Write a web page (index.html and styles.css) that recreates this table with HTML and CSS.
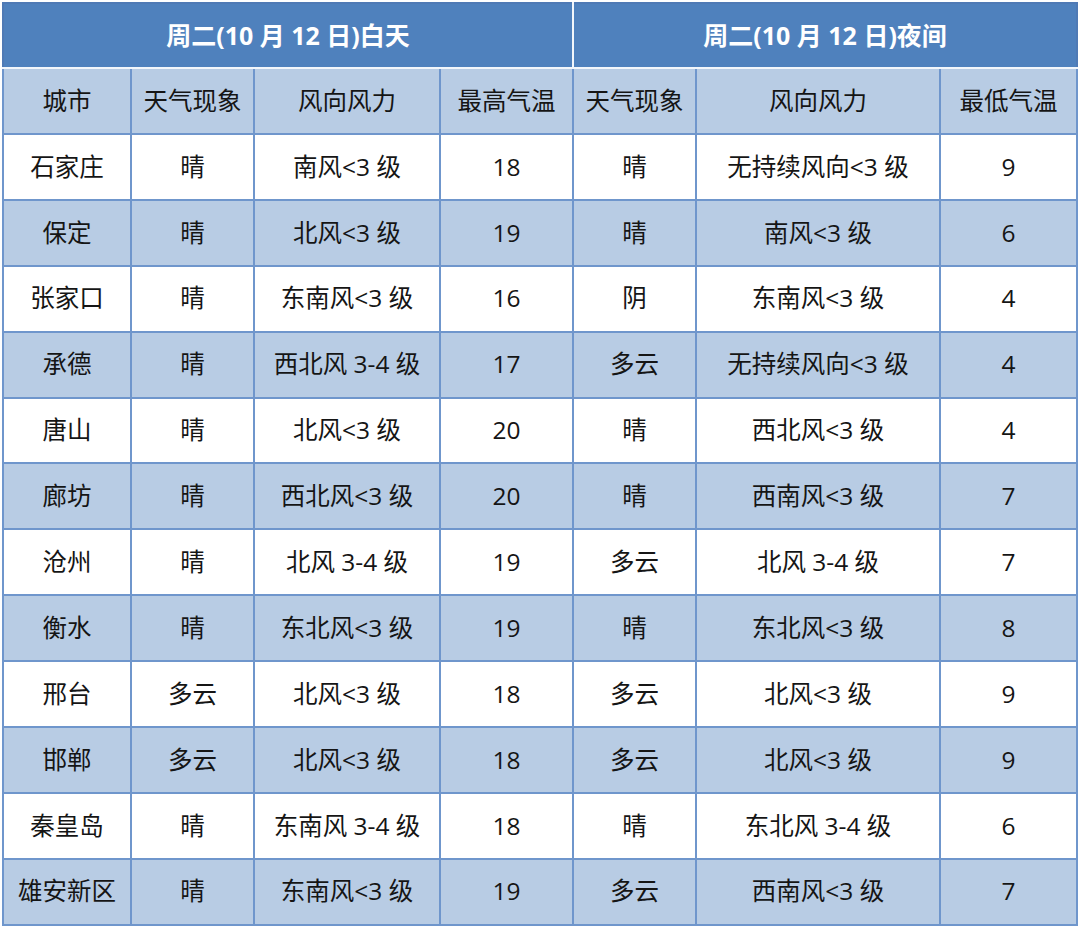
FILE: index.html
```html
<!DOCTYPE html>
<html lang="zh-CN">
<head>
<meta charset="utf-8">
<title>河北天气预报</title>
<link rel="stylesheet" href="styles.css">
</head>
<body>
<div class="wrap">
<table class="forecast">
  <colgroup>
    <col class="c-city">
    <col class="c-wx">
    <col class="c-wind">
    <col class="c-temp">
    <col class="c-wx2">
    <col class="c-wind2">
    <col class="c-temp2">
  </colgroup>
  <thead>
    <tr class="title-row">
      <th colspan="4" class="day">周二(10 月 12 日)白天</th>
      <th colspan="3" class="night">周二(10 月 12 日)夜间</th>
    </tr>
    <tr class="head-row">
      <th>城市</th><th>天气现象</th><th>风向风力</th><th>最高气温</th>
      <th>天气现象</th><th>风向风力</th><th>最低气温</th>
    </tr>
  </thead>
  <tbody>
    <tr><td>石家庄</td><td>晴</td><td>南风&lt;3 级</td><td>18</td><td>晴</td><td>无持续风向&lt;3 级</td><td>9</td></tr>
    <tr><td>保定</td><td>晴</td><td>北风&lt;3 级</td><td>19</td><td>晴</td><td>南风&lt;3 级</td><td>6</td></tr>
    <tr><td>张家口</td><td>晴</td><td>东南风&lt;3 级</td><td>16</td><td>阴</td><td>东南风&lt;3 级</td><td>4</td></tr>
    <tr><td>承德</td><td>晴</td><td>西北风 3-4 级</td><td>17</td><td>多云</td><td>无持续风向&lt;3 级</td><td>4</td></tr>
    <tr><td>唐山</td><td>晴</td><td>北风&lt;3 级</td><td>20</td><td>晴</td><td>西北风&lt;3 级</td><td>4</td></tr>
    <tr><td>廊坊</td><td>晴</td><td>西北风&lt;3 级</td><td>20</td><td>晴</td><td>西南风&lt;3 级</td><td>7</td></tr>
    <tr><td>沧州</td><td>晴</td><td>北风 3-4 级</td><td>19</td><td>多云</td><td>北风 3-4 级</td><td>7</td></tr>
    <tr><td>衡水</td><td>晴</td><td>东北风&lt;3 级</td><td>19</td><td>晴</td><td>东北风&lt;3 级</td><td>8</td></tr>
    <tr><td>邢台</td><td>多云</td><td>北风&lt;3 级</td><td>18</td><td>多云</td><td>北风&lt;3 级</td><td>9</td></tr>
    <tr><td>邯郸</td><td>多云</td><td>北风&lt;3 级</td><td>18</td><td>多云</td><td>北风&lt;3 级</td><td>9</td></tr>
    <tr><td>秦皇岛</td><td>晴</td><td>东南风 3-4 级</td><td>18</td><td>晴</td><td>东北风 3-4 级</td><td>6</td></tr>
    <tr><td>雄安新区</td><td>晴</td><td>东南风&lt;3 级</td><td>19</td><td>多云</td><td>西南风&lt;3 级</td><td>7</td></tr>
  </tbody>
</table>
</div>
</body>
</html>
```

FILE: styles.css
```css
html, body {
  margin: 0;
  padding: 0;
  background: #ffffff;
}

.wrap {
  padding: 2px 2px 0 2px;
}

.forecast {
  border-collapse: collapse;
  table-layout: fixed;
  width: 1076px;
  font-family: "Open Sans", "Noto Sans CJK SC", "Microsoft YaHei", sans-serif;
  font-size: 24.5px;
  color: #151515;
  border: 2px solid #4f7ab5;
}

.c-city { width: 128px; }
.c-wx { width: 123px; }
.c-wind { width: 186px; }
.c-temp { width: 133px; }
.c-wx2 { width: 123px; }
.c-wind2 { width: 244px; }
.c-temp2 { width: 137px; }

.forecast th,
.forecast td {
  text-align: center;
  vertical-align: middle;
  padding: 0;
  border: 2px solid #6f96cc;
  white-space: nowrap;
  line-height: 1;
}

.title-row th {
  height: 63px;
  background: #4f81bd;
  color: #ffffff;
  font-size: 25px;
  font-weight: 700;
  border-top-color: #4f7ab5;
  border-bottom-color: #f2f6fb;
}

.title-row th.day {
  border-right-color: #f2f6fb;
  border-left-color: #4f7ab5;
}

.title-row th.night {
  border-left-color: #f2f6fb;
  border-right-color: #4f7ab5;
}

.head-row th {
  height: 64px;
  background: #b8cce4;
  font-weight: 400;
}

.forecast tbody td {
  height: 63.9px;
  background: #ffffff;
}

.forecast tbody tr:nth-child(even) td {
  background: #b8cce4;
}
```
